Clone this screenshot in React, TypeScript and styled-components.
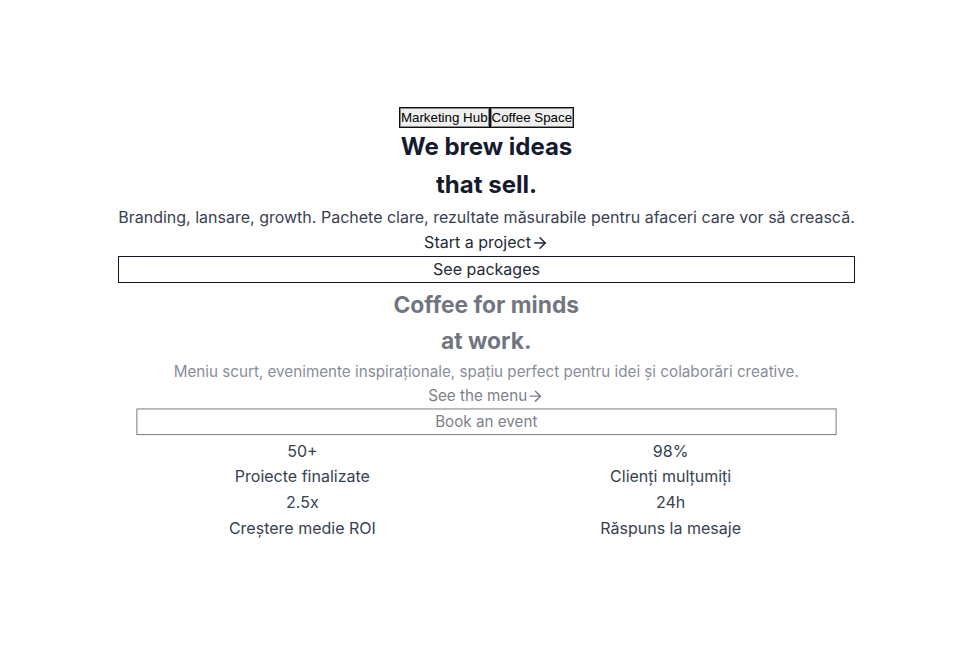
import React from "react";
import styled, { createGlobalStyle } from "styled-components";
import { ArrowRight } from "lucide-react";

const Global = createGlobalStyle`
  html, body { margin: 0; padding: 0; background: #ffffff; }
  body { font-family: Inter, "Noto Sans", sans-serif; line-height: 1.6; color: #1f2937; }
`;

const Page = styled.div`
  min-height: 100vh;
  display: flex;
  align-items: center;
  justify-content: center;
`;

const Content = styled.main`
  display: flex;
  flex-direction: column;
  align-items: center;
  width: max-content;
`;

const Tabs = styled.div`
  display: flex;
`;

const Tab = styled.button`
  font-family: Arial, "Liberation Sans", sans-serif;
  font-size: 13.333px;
  line-height: normal;
  color: #000;
  background: #efefef;
  border: 1px solid #111111;
  box-shadow: inset 0 0 0 1px #8a8a8a;
  padding: 2px 1px;
  margin: 0;
  border-radius: 0;
`;

const Section = styled.section<{ $muted?: boolean }>`
  align-self: stretch;
  display: flex;
  flex-direction: column;
  align-items: stretch;
  text-align: center;
  opacity: ${(p) => (p.$muted ? 0.6 : 1)};
  transform: ${(p) => (p.$muted ? "scale(0.95)" : "none")};
`;

const Title = styled.h1`
  margin: 0;
  font-size: 24px;
  line-height: 1.6;
  font-weight: 700;
  color: #141b2e;
`;

const Lead = styled.p`
  margin: 0;
  font-size: 16px;
  color: #374151;
`;

const LinkRow = styled.div`
  display: flex;
  justify-content: center;
`;

const TextLink = styled.a`
  display: inline-flex;
  align-items: center;
  font-size: 16px;
  color: #1f2937;
  text-decoration: none;
  svg { display: block; }
`;

const OutlineButton = styled.button`
  font-family: Inter, "Noto Sans", sans-serif;
  font-size: 16px;
  line-height: 1.6;
  color: #1f2937;
  background: transparent;
  border: 1px solid #111827;
  border-radius: 0;
  padding: 0;
  margin: 0;
`;

const Stats = styled.div`
  align-self: stretch;
  display: grid;
  grid-template-columns: 1fr 1fr;
  text-align: center;
`;

const Stat = styled.div`
  display: flex;
  flex-direction: column;
`;

const StatValue = styled.div`
  font-size: 16px;
  color: #374151;
`;

const StatLabel = styled.div`
  font-size: 16px;
  color: #374151;
`;

const stats = [
  { v: "50+", l: "Proiecte finalizate" },
  { v: "98%", l: "Clienți mulțumiți" },
  { v: "2.5x", l: "Creștere medie ROI" },
  { v: "24h", l: "Răspuns la mesaje" },
];

export default function App() {
  return (
    <>
      <Global />
      <Page>
        <Content>
          <Tabs>
            <Tab>Marketing Hub</Tab>
            <Tab>Coffee Space</Tab>
          </Tabs>
          <Section>
            <Title>
              We brew ideas
              <br />
              that sell.
            </Title>
            <Lead>
              Branding, lansare, growth. Pachete clare, rezultate măsurabile pentru afaceri care vor să crească.
            </Lead>
            <LinkRow>
              <TextLink href="#">
                Start a project
                <ArrowRight size={18} strokeWidth={2} />
              </TextLink>
            </LinkRow>
            <OutlineButton>See packages</OutlineButton>
          </Section>
          <Section $muted>
            <Title>
              Coffee for minds
              <br />
              at work.
            </Title>
            <Lead>
              Meniu scurt, evenimente inspiraționale, spațiu perfect pentru idei și colaborări creative.
            </Lead>
            <LinkRow>
              <TextLink href="#">
                See the menu
                <ArrowRight size={18} strokeWidth={2} />
              </TextLink>
            </LinkRow>
            <OutlineButton>Book an event</OutlineButton>
          </Section>
          <Stats>
            {stats.map((s) => (
              <Stat key={s.l}>
                <StatValue>{s.v}</StatValue>
                <StatLabel>{s.l}</StatLabel>
              </Stat>
            ))}
          </Stats>
        </Content>
      </Page>
    </>
  );
}
